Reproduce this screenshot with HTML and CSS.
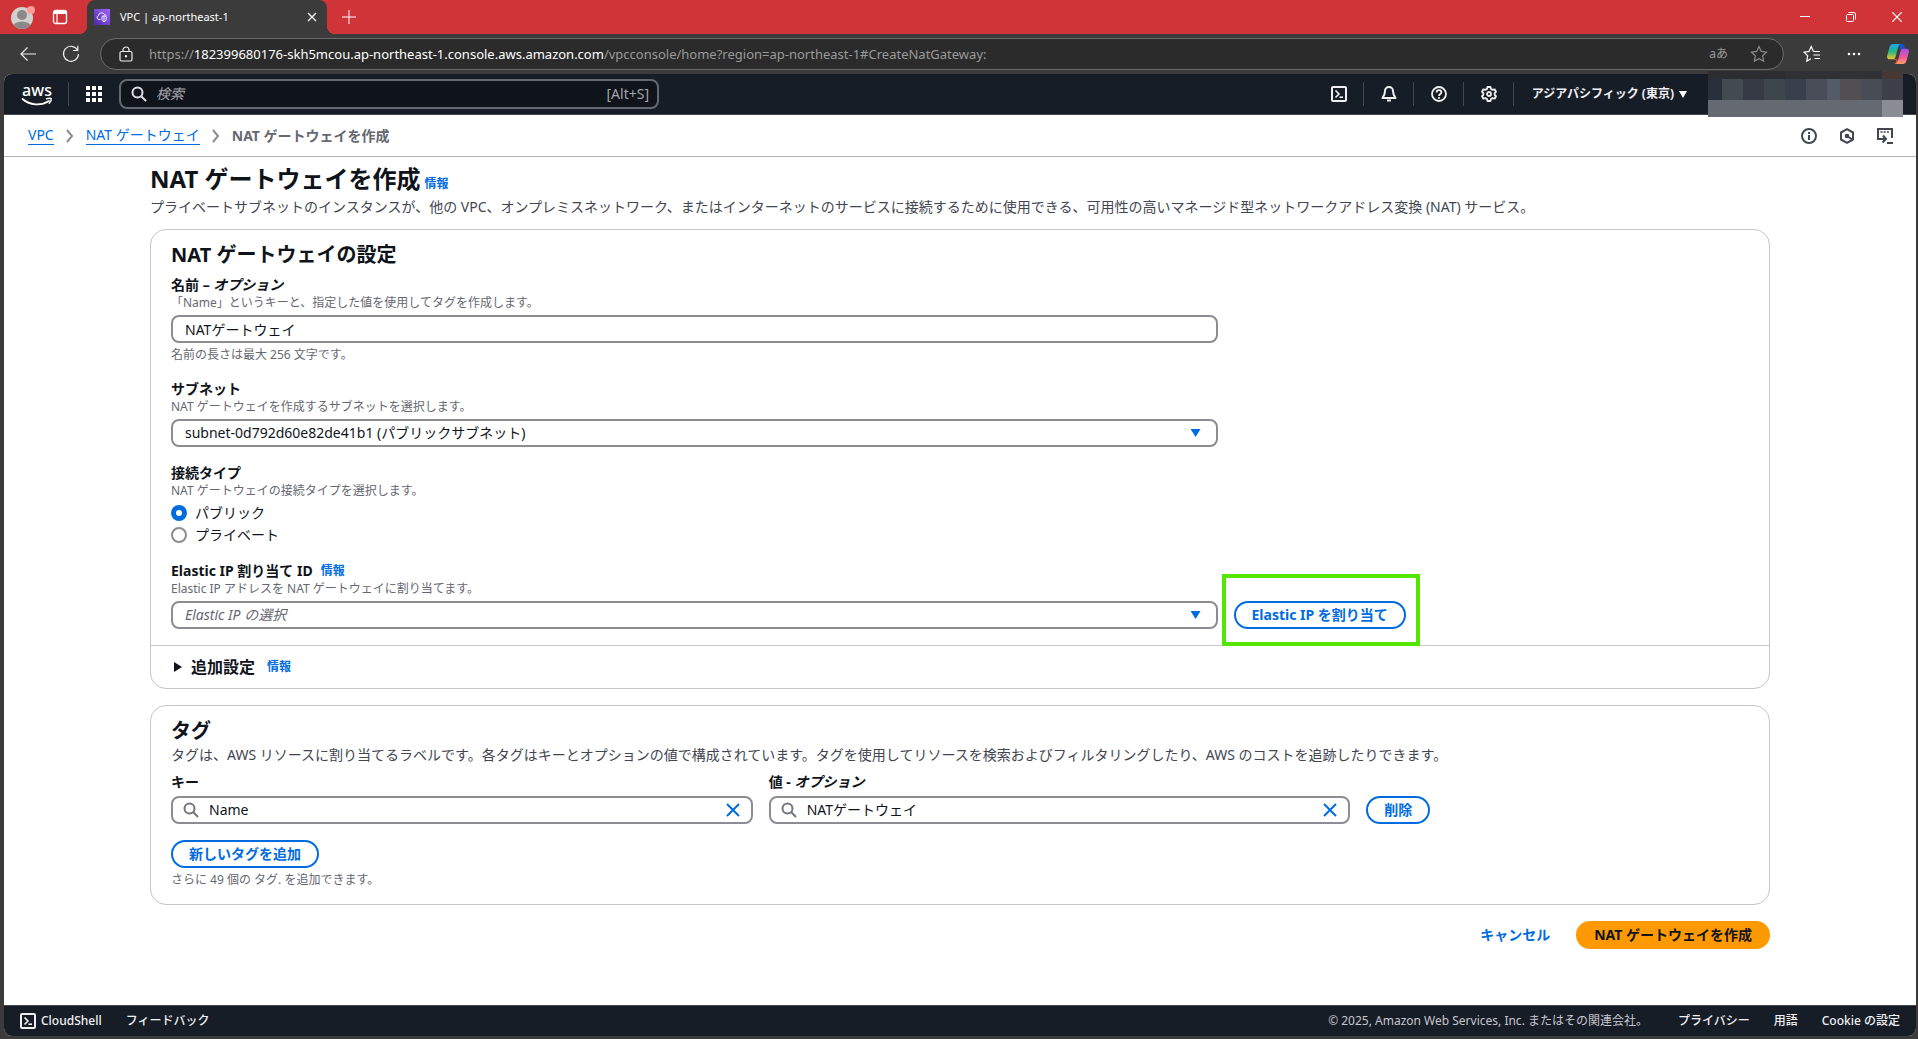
FILE: index.html
```html
<!DOCTYPE html>
<html lang="ja">
<head>
<meta charset="utf-8">
<meta name="viewport" content="width=device-width, initial-scale=1">
<title>VPC | ap-northeast-1</title>
<link rel="stylesheet" href="styles.css">
</head>
<body>
<div class="titlebar">
  <button class="chrome-btn profile" aria-label="プロファイル">
    <svg width="26" height="26" viewBox="0 0 26 26"><defs><clipPath id="face"><circle cx="12" cy="14" r="11"/></clipPath></defs><circle cx="12" cy="14" r="11" fill="#d3d1ce"/><g clip-path="url(#face)" fill="#8b8987"><circle cx="12" cy="11" r="5"/><ellipse cx="12" cy="23" rx="9" ry="5.500"/></g><circle cx="21" cy="6" r="4" fill="#ff9d98"/></svg>
  </button>
  <button class="chrome-btn workspaces" aria-label="タブ操作">
    <svg width="16" height="16" viewBox="0 0 16 16"><rect x="1.500" y="1.500" width="13" height="13" rx="2" fill="none" stroke="#fff" stroke-width="1.300"/><path d="M1.500 5V3a1.500 1.500 0 0 1 1.500-1.500h10A1.500 1.500 0 0 1 14.500 3v2z" fill="#fff"/><path d="M5 5v9.500" stroke="#fff" stroke-width="1.200"/></svg>
  </button>
  <div class="tab">
    <svg class="favicon" width="16" height="16" viewBox="0 0 16 16"><defs><linearGradient id="fav" x1="0" y1="1" x2="1" y2="0"><stop offset="0" stop-color="#4d27aa"/><stop offset="1" stop-color="#a166ff"/></linearGradient></defs><rect width="16" height="16" fill="url(#fav)"/><path d="M6.500 10.500H5A2 2 0 0 1 4.500 6.600 3.200 3.200 0 0 1 10.500 5.500c1 0 1.600.6 1.800 1.200M8 7.500l2-.8 2.200.8v3c0 1-.8 1.800-2.200 2.300-1.300-.5-2-1.300-2-2.300zM10 7v5.500" fill="none" stroke="#fff" stroke-width=".9"/></svg>
    <span class="tab-title">VPC | ap-northeast-1</span>
    <button class="chrome-btn" aria-label="タブを閉じる"><svg width="10" height="10" viewBox="0 0 10 10" stroke="#fff" stroke-width="1.300"><path d="M1 1l8 8M9 1L1 9"/></svg></button>
  </div>
  <button class="chrome-btn new-tab" aria-label="新しいタブ"><svg width="14" height="14" viewBox="0 0 14 14" stroke="#fff"><path d="M7 0v14M0 7h14"/></svg></button>
  <div class="window-controls">
    <button class="chrome-btn" aria-label="最小化"><svg width="10" height="10" viewBox="0 0 10 10" stroke="#fff"><path d="M0 4.500h10"/></svg></button>
    <button class="chrome-btn" aria-label="元に戻す"><svg width="10" height="10" viewBox="0 0 10 10" fill="none" stroke="#fff"><rect x=".5" y="2.500" width="7" height="7" rx="1"/><path d="M2.500.5H8A1.500 1.500 0 0 1 9.500 2v5.500"/></svg></button>
    <button class="chrome-btn" aria-label="閉じる"><svg width="10" height="10" viewBox="0 0 10 10" stroke="#fff" stroke-width="1.200"><path d="M0 0l10 10M10 0L0 10"/></svg></button>
  </div>
</div>

<div class="toolbar">
  <button class="chrome-btn back" aria-label="戻る"><svg width="16" height="14" viewBox="0 0 16 14" fill="none" stroke="#eee" stroke-width="1.200"><path d="M16 7H1M7.500.5L1 7l6.500 6.500"/></svg></button>
  <button class="chrome-btn reload" aria-label="更新"><svg width="18" height="18" viewBox="0 0 18 18" fill="none" stroke="#eee" stroke-width="1.200"><path d="M15.500 5A7.500 7.500 0 1 0 16.500 9M15.800.8v4.700h-4.700"/></svg></button>
  <div class="address">
    <svg width="14" height="16" viewBox="0 0 14 16" fill="none" stroke="#eee" stroke-width="1.200"><rect x="1" y="5.500" width="12" height="9.500" rx="1.500"/><path d="M4 5.500V4a3 3 0 0 1 6 0v1.500"/><circle cx="7" cy="10.300" r=".6" fill="#eee"/></svg>
    <span class="url">https://<b>182399680176-skh5mcou.ap-northeast-1.console.aws.amazon.com</b>/vpcconsole/home?region=ap-northeast-1#CreateNatGateway:</span>
    <span class="translate">aあ</span>
    <svg width="18" height="18" viewBox="0 0 18 18" fill="none" stroke="#8a8a8a" stroke-width="1.200"><path d="M9 1.500l2.300 4.900 5.200.7-3.800 3.700.9 5.300L9 13.600l-4.600 2.500.9-5.300L1.500 7.100l5.200-.7z"/></svg>
  </div>
  <button class="chrome-btn" aria-label="お気に入り"><svg width="18" height="18" viewBox="0 0 18 18" fill="none" stroke="#fff" stroke-width="1.200"><path d="M10.500 6.400L8.200 1.500 6 6.400l-5 .7 3.700 3.700-.9 5.300 4.200-2.300M10.500 6.500H17M10.500 10H17M11.500 13.500H17"/></svg></button>
  <button class="chrome-btn" aria-label="設定など"><svg width="14" height="4" viewBox="0 0 14 4" fill="#fff"><circle cx="2" cy="2" r="1.300"/><circle cx="7" cy="2" r="1.300"/><circle cx="12" cy="2" r="1.300"/></svg></button>
  <button class="chrome-btn" aria-label="Copilot"><svg width="22" height="20" viewBox="0 0 22 20"><defs><linearGradient id="cp1" x1="0" y1="0" x2="0" y2="1"><stop offset="0" stop-color="#1fa8e8"/><stop offset=".5" stop-color="#26b584"/><stop offset="1" stop-color="#f6c626"/></linearGradient><linearGradient id="cp2" x1="0" y1="0" x2="0" y2="1"><stop offset="0" stop-color="#a04ff0"/><stop offset=".55" stop-color="#f0569a"/><stop offset="1" stop-color="#ffa25e"/></linearGradient></defs><path d="M12 0h3c1.500 0 2 1 2.400 2.500L18 5h-5z" fill="#1b4fd0"/><path d="M6 15h4l-1 3c-.4 1.300-1 2-2 2h4c1.500 0 2.500-1 3-2.500z" fill="#f25b3a"/><path d="M6 0h8c-1.500 0-2.200 1-2.600 2.500L8.500 13c-.5 1.600-1.200 2.300-3 2.300H2.500C.5 15.300-.4 13.500.2 11.500L2.600 3C3.200 1 4.500 0 6 0z" fill="url(#cp1)"/><path d="M16 20H8c1.500 0 2.200-1 2.600-2.500L13.500 7c.5-1.600 1.200-2.300 3-2.300h3c2 0 2.900 1.800 2.300 3.800L19.400 17c-.6 2-1.900 3-3.400 3z" fill="url(#cp2)"/></svg></button>
</div>

<div class="viewport">
  <header class="nav">
    <a class="aws" href="#" aria-label="AWS コンソールホーム"><span>aws</span><svg width="32" height="9" viewBox="0 0 32 9" fill="none" stroke="#fff" stroke-linecap="round"><path d="M1.500 2C9 8.500 20 9 28 4" stroke-width="1.800"/><path d="M25.500 1.700c2-.6 4.500-.8 4.700.1.200.8-.6 3-1.900 4.400" stroke-width="1.500"/></svg></a>
    <span class="rule rule-first"></span>
    <button class="nav-btn services" aria-label="サービス"><svg width="16" height="16" viewBox="0 0 16 16" fill="#fff"><path d="M0 0h4v4H0zM6 0h4v4H6zM12 0h4v4h-4zM0 6h4v4H0zM6 6h4v4H6zM12 6h4v4h-4zM0 12h4v4H0zM6 12h4v4H6zM12 12h4v4h-4z"/></svg></button>
    <label class="nav-search">
      <svg width="16" height="16" viewBox="0 0 16 16" fill="none" stroke="#dedee3" stroke-width="2"><circle cx="6.500" cy="6.500" r="5"/><path d="M10.500 10.500L15 15"/></svg>
      <input type="search" placeholder="検索" aria-label="検索">
      <span>[Alt+S]</span>
    </label>
    <div class="nav-tools">
      <button class="nav-btn" aria-label="CloudShell"><svg width="16" height="16" viewBox="0 0 16 16" fill="none" stroke="#f0f0f3" stroke-width="2"><rect x="1" y="1" width="14" height="14" rx="1"/><path d="M4.500 4.500L8 8l-3.500 3.500" stroke-width="1.600"/><path d="M8.500 11.200H12" stroke-width="1.600"/></svg></button>
      <span class="rule"></span>
      <button class="nav-btn" aria-label="通知"><svg width="16" height="16" viewBox="0 0 16 16" fill="none" stroke="#f0f0f3" stroke-width="2" stroke-linejoin="round"><path d="M8 1a4 4 0 0 0-4 4c0 3.500-1 5-2.500 7h13C13 10 12 8.500 12 5a4 4 0 0 0-4-4z"/><path d="M6 14.500h4"/></svg></button>
      <span class="rule"></span>
      <button class="nav-btn" aria-label="サポート"><svg width="16" height="16" viewBox="0 0 16 16" fill="none" stroke="#f0f0f3" stroke-width="1.800"><circle cx="8" cy="8" r="7"/><path d="M5.600 6.500C5.600 5 6.600 4.200 8 4.200s2.400.9 2.400 2.100C10.400 8 8 8 8 10M8 11v1.800"/></svg></button>
      <span class="rule"></span>
      <button class="nav-btn" aria-label="設定"><svg width="16" height="16" viewBox="0 0 16 16" fill="none" stroke="#f0f0f3" stroke-width="1.800" stroke-linejoin="round"><path d="M6.500 1h3l.5 2 1.600.9 2-.6 1.400 2.500L13.600 7.200v1.600l1.400 1.400-1.400 2.500-2-.6-1.600.9-.5 2h-3l-.5-2-1.600-.9-2 .6L1 10.200l1.400-1.400V7.200L1 5.800l1.400-2.500 2 .6L6 3z"/><circle cx="8" cy="8" r="2"/></svg></button>
      <span class="rule"></span>
      <button class="nav-btn region">アジアパシフィック (東京)<svg width="8" height="7" viewBox="0 0 8 7" fill="#fff"><path d="M0 0h8L4 7z"/></svg></button>
    </div>
    <svg class="redacted" width="195" height="46" viewBox="0 0 195 46" shape-rendering="crispEdges" aria-hidden="true"><path fill="#2c2d30" d="M0 0h195v8H0z"/><path fill="#303134" d="M77 0h97v8H77z"/><path fill="#463935" d="M174 0h21v8h-21z"/><path fill="#29303c" d="M0 8h14v21H0z"/><path fill="#434a50" d="M14 8h21v21H14z"/><path fill="#363a44" d="M35 8h21v21H35z"/><path fill="#3d454d" d="M56 8h21v21H56z"/><path fill="#3a3f4c" d="M77 8h21v21H77z"/><path fill="#494d57" d="M98 8h21v21H98z"/><path fill="#535b66" d="M119 8h13v21h-13z"/><path fill="#514f52" d="M132 8h21v21h-21z"/><path fill="#484c55" d="M153 8h21v21h-21z"/><path fill="#3d404a" d="M174 8h21v21h-21z"/><path fill="#656971" d="M0 29h174v17H0z"/><path fill="#8a8d95" d="M174 29h21v17h-21z"/></svg>
  </header>

  <nav class="crumbs" aria-label="パンくずリスト">
    <a href="#">VPC</a>
    <svg width="8" height="14" viewBox="0 0 8 14" fill="none" stroke="#8c8c94" stroke-width="2"><path d="M1 1l5 6-5 6"/></svg>
    <a href="#">NAT ゲートウェイ</a>
    <svg width="8" height="14" viewBox="0 0 8 14" fill="none" stroke="#8c8c94" stroke-width="2"><path d="M1 1l5 6-5 6"/></svg>
    <span class="current" aria-current="page">NAT ゲートウェイを作成</span>
    <div class="crumb-tools">
      <button class="nav-btn" aria-label="情報"><svg width="16" height="16" viewBox="0 0 16 16" fill="none" stroke="#424650" stroke-width="2"><circle cx="8" cy="8" r="7"/><path d="M8 7v5M8 4v2"/></svg></button>
      <button class="nav-btn" aria-label="診断"><svg width="16" height="16" viewBox="0 0 16 16" fill="none" stroke="#424650" stroke-width="2"><path d="M8 1.200l6 3.300v7l-6 3.300-6-3.300v-7z" stroke-linejoin="round"/><circle cx="8" cy="8" r="1.300" fill="#424650"/><path d="M8.500 8.500l5 3"/></svg></button>
      <button class="nav-btn" aria-label="ショートカット"><svg width="16" height="16" viewBox="0 0 16 16" fill="none" stroke="#424650" stroke-width="2"><path d="M4 11H1V1h14v9"/><path d="M3.500 4h2M6.700 4h2M9.900 4h2" stroke-width="1.500"/><path d="M3.500 11H8M6 7.500L9 11l-3.500 3.500M10 15h6"/></svg></button>
    </div>
  </nav>

  <main class="content">
    <div class="page-head">
      <h1>NAT ゲートウェイを作成</h1>
      <a class="info" href="#">情報</a>
    </div>
    <p class="lead">プライベートサブネットのインスタンスが、他の VPC、オンプレミスネットワーク、またはインターネットのサービスに接続するために使用できる、可用性の高いマネージド型ネットワークアドレス変換 (NAT) サービス。</p>

    <section class="card">
      <div class="card-body">
        <h2>NAT ゲートウェイの設定</h2>
        <div class="fields">
          <div class="field">
            <div>
              <label class="label" for="name">名前 – <i>オプション</i></label>
              <p class="hint">「Name」というキーと、指定した値を使用してタグを作成します。</p>
            </div>
            <input class="control" id="name" type="text" value="NATゲートウェイ">
            <p class="hint">名前の長さは最大 256 文字です。</p>
          </div>
          <div class="field">
            <div>
              <label class="label" for="subnet">サブネット</label>
              <p class="hint">NAT ゲートウェイを作成するサブネットを選択します。</p>
            </div>
            <div class="select"><select class="control" id="subnet"><option>subnet-0d792d60e82de41b1 (パブリックサブネット)</option></select></div>
          </div>
          <div class="field" role="radiogroup" aria-labelledby="type-label">
            <div>
              <span class="label" id="type-label">接続タイプ</span>
              <p class="hint">NAT ゲートウェイの接続タイプを選択します。</p>
            </div>
            <div class="radios">
              <label><input type="radio" name="type" checked>パブリック</label>
              <label><input type="radio" name="type">プライベート</label>
            </div>
          </div>
          <div class="field">
            <div>
              <div class="label-row"><label class="label" for="eip">Elastic IP 割り当て ID</label><a class="info" href="#">情報</a></div>
              <p class="hint">Elastic IP アドレスを NAT ゲートウェイに割り当てます。</p>
            </div>
            <div class="select"><select class="control empty" id="eip"><option>Elastic IP の選択</option></select></div>
          </div>
          <div class="highlight"><button class="btn">Elastic IP を割り当て</button></div>
        </div>
      </div>
      <details class="more">
        <summary><svg width="8" height="10" viewBox="0 0 8 10" fill="#0f141a"><path d="M0 0l8 5-8 5z"/></svg><strong>追加設定</strong><a class="info" href="#">情報</a></summary>
      </details>
    </section>

    <section class="card">
      <div class="card-body">
        <h2>タグ</h2>
        <p class="lead">タグは、AWS リソースに割り当てるラベルです。各タグはキーとオプションの値で構成されています。タグを使用してリソースを検索およびフィルタリングしたり、AWS のコストを追跡したりできます。</p>
        <div class="tag-grid">
          <div class="field">
            <label class="label" for="key">キー</label>
            <div class="control search">
              <svg width="16" height="16" viewBox="0 0 16 16" fill="none" stroke="#72747e" stroke-width="2"><circle cx="6.500" cy="6.500" r="5"/><path d="M10.500 10.500L15 15"/></svg>
              <input id="key" type="text" value="Name">
              <button aria-label="クリア"><svg width="14" height="14" viewBox="0 0 14 14" stroke="#006ce0" stroke-width="2"><path d="M1 1l12 12M13 1L1 13"/></svg></button>
            </div>
          </div>
          <div class="field">
            <label class="label" for="value">値 - <i>オプション</i></label>
            <div class="control search">
              <svg width="16" height="16" viewBox="0 0 16 16" fill="none" stroke="#72747e" stroke-width="2"><circle cx="6.500" cy="6.500" r="5"/><path d="M10.500 10.500L15 15"/></svg>
              <input id="value" type="text" value="NATゲートウェイ">
              <button aria-label="クリア"><svg width="14" height="14" viewBox="0 0 14 14" stroke="#006ce0" stroke-width="2"><path d="M1 1l12 12M13 1L1 13"/></svg></button>
            </div>
          </div>
          <button class="btn">削除</button>
        </div>
        <button class="btn add-tag">新しいタグを追加</button>
        <p class="hint">さらに 49 個の タグ. を追加できます。</p>
      </div>
    </section>

    <div class="actions">
      <button class="btn plain">キャンセル</button>
      <button class="btn primary">NAT ゲートウェイを作成</button>
    </div>
  </main>

  <footer class="footer">
    <a class="shell" href="#"><svg width="16" height="16" viewBox="0 0 16 16" fill="none" stroke="#f0f0f3" stroke-width="2"><rect x="1" y="1" width="14" height="14" rx="1"/><path d="M4.500 4.500L8 8l-3.500 3.500" stroke-width="1.600"/><path d="M8.500 11.200H12" stroke-width="1.600"/></svg>CloudShell</a>
    <a href="#">フィードバック</a>
    <span class="copyright">© 2025, Amazon Web Services, Inc. またはその関連会社。</span>
    <a href="#">プライバシー</a>
    <a href="#">用語</a>
    <a href="#">Cookie の設定</a>
  </footer>
</div>
</body>
</html>
```
FILE: styles.css
```css
* { box-sizing: border-box; }

body {
  margin: 0;
  min-height: 100vh;
  display: flex;
  flex-direction: column;
  background: #3b3b3b;
  color: #0f141a;
  font: 14px/20px "Noto Sans", "Noto Sans CJK JP", sans-serif;
}

h1, h2, p { margin: 0; }
a { color: #006ce0; text-decoration: none; }
svg { display: block; flex: none; }
button, input, select { font: inherit; color: inherit; margin: 0; }
button { cursor: pointer; }

/* Browser frame */
.chrome-btn,
.nav-btn {
  display: flex;
  align-items: center;
  justify-content: center;
  padding: 0;
  border: 0;
  background: none;
}

.titlebar {
  display: flex;
  align-items: center;
  height: 34px;
  background: #d13438;
}
.profile { margin-left: 10px; }
.workspaces { margin-left: 16px; }
.tab {
  position: relative;
  display: flex;
  align-items: center;
  width: 240px;
  height: 34px;
  margin-left: 19px;
  padding: 0 10px 0 7px;
  border-radius: 8px 8px 0 0;
  background: #3b3b3b;
  color: #fff;
  font-size: 11px;
}
.tab::before,
.tab::after {
  content: "";
  position: absolute;
  bottom: 0;
  width: 8px;
  height: 8px;
}
.tab::before { right: 100%; background: radial-gradient(circle at 0 0, transparent 8px, #3b3b3b 8px); }
.tab::after { left: 100%; background: radial-gradient(circle at 100% 0, transparent 8px, #3b3b3b 8px); }
.tab-title { flex: 1; margin-left: 10px; }
.new-tab { margin-left: 15px; }
.window-controls { display: flex; gap: 4px; margin-left: auto; }
.window-controls .chrome-btn { width: 42px; height: 34px; }

.toolbar {
  display: flex;
  align-items: center;
  gap: 26px;
  height: 40px;
  padding: 0 9px 0 20px;
}
.address {
  flex: 1;
  display: flex;
  align-items: center;
  min-width: 0;
  height: 32px;
  margin: 0 -7px 0 -6px;
  padding: 0 15px 0 18px;
  border: 1px solid #6b6b6b;
  border-radius: 16px;
  background: #2b2b2b;
}
.url {
  flex: 1;
  margin-left: 16px;
  color: #9a9a9a;
  font-size: 13px;
  white-space: nowrap;
  overflow: hidden;
}
.url b { color: #fff; font-weight: 400; }
.translate { margin-right: 22px; color: #9a9a9a; font-size: 12px; }

/* Page area */
.viewport {
  flex: 1;
  display: flex;
  flex-direction: column;
  margin: 0 2px 3px 4px;
  border-radius: 8px;
  background: #fff;
}

.nav {
  position: relative;
  display: flex;
  align-items: center;
  height: 41px;
  padding: 0 229px 0 16px;
  border-bottom: 1px solid #424650;
  border-radius: 8px 8px 0 0;
  background: #161d26;
  color: #f0f0f3;
}
.aws {
  display: flex;
  flex-direction: column;
  align-items: center;
  width: 34px;
  color: #fff;
  font-size: 16px;
  font-weight: 500;
  line-height: 14px;
}
.rule { width: 1px; height: 24px; background: #424650; }
.rule-first { margin-left: 14px; }
.services { margin-left: 17px; }
.nav-search {
  display: flex;
  align-items: center;
  width: 540px;
  height: 30px;
  margin-left: 17px;
  padding: 0 8px 0 10px;
  border: 2px solid #656871;
  border-radius: 8px;
  background: #0f141a;
  color: #a4a4ad;
}
.nav-search input {
  flex: 1;
  min-width: 0;
  padding: 0;
  margin-left: 9px;
  border: 0;
  outline: 0;
  background: none;
}
.nav-search input::placeholder { color: #a4a4ad; font-style: italic; opacity: 1; }
.nav-tools { display: flex; align-items: center; margin-left: auto; }
.nav-tools .nav-btn { padding: 0 16px 0 17px; }
.nav-tools .region {
  gap: 5px;
  padding: 0 0 0 18px;
  font-size: 12px;
  font-weight: 700;
}
.redacted { position: absolute; top: -3px; right: 13px; }

.crumbs {
  display: flex;
  align-items: center;
  gap: 12px;
  height: 42px;
  padding: 0 23px 0 24px;
  border-bottom: 1px solid #b4b4bb;
}
.crumbs a { line-height: 18px; border-bottom: 1px solid; }
.current { color: #656871; font-weight: 700; }
.crumb-tools { display: flex; gap: 22px; margin-left: auto; }

/* Form */
.content { flex: 1; padding: 6px 146px 40px; }
.page-head { display: flex; align-items: baseline; gap: 4px; }
h1 { font-size: 24px; line-height: 32px; }
h2 { font-size: 20px; line-height: 24px; }
.info { font-size: 12px; font-weight: 700; }
.lead { margin-top: 2px; color: #424650; }

.card {
  margin-top: 16px;
  border: 1px solid #c6c6cd;
  border-radius: 16px;
}
.lead + .card { margin-top: 12px; }
.card-body { padding: 13px 20px 16px; }
.fields {
  display: grid;
  grid-template-columns: 67fr 33fr;
  gap: 16px;
  margin-top: 8px;
}
.fields .field { grid-column: 1; }
.field { display: flex; flex-direction: column; gap: 4px; min-width: 0; }
.label { display: block; font-weight: 700; }
.label-row { display: flex; align-items: center; gap: 8px; }
.hint { color: #656871; font-size: 12px; line-height: 16px; }

.control {
  display: block;
  width: 100%;
  height: 28px;
  padding: 0 12px;
  border: 2px solid #8c8c94;
  border-radius: 8px;
  background: #fff;
  appearance: none;
}
.empty { color: #656871; font-style: italic; }
.select { position: relative; }
.select::after {
  content: "";
  position: absolute;
  top: 10px;
  right: 17px;
  width: 10px;
  height: 8px;
  background: #006ce0;
  clip-path: polygon(0 0, 100% 0, 50% 100%);
}

.radios { display: flex; flex-direction: column; gap: 2px; }
.radios label { display: flex; align-items: center; gap: 8px; }
.radios input {
  appearance: none;
  width: 16px;
  height: 16px;
  border: 2px solid #8c8c94;
  border-radius: 50%;
  background: #fff;
}
.radios input:checked { border: 5px solid #006ce0; }

.btn {
  height: 28px;
  padding: 0 16px;
  border: 2px solid #006ce0;
  border-radius: 14px;
  background: #fff;
  color: #006ce0;
  font-weight: 700;
  line-height: 20px;
  white-space: nowrap;
}
.plain { border-color: transparent; }
.primary { border-color: #ff9900; background: #ff9900; color: #0f141a; }

.highlight { position: relative; align-self: end; justify-self: start; }
.highlight::after {
  content: "";
  position: absolute;
  inset: -27px -14px -17px -12px;
  border: 4px solid #55e600;
  pointer-events: none;
}

.more { border-top: 1px solid #c6c6cd; }
.more summary {
  display: flex;
  align-items: center;
  height: 42px;
  padding: 0 23px;
  list-style: none;
}
.more strong { margin: 0 12px 0 9px; font-size: 16px; }

.tag-grid {
  display: grid;
  grid-template-columns: 38fr 38fr 25fr;
  align-items: end;
  justify-items: start;
  gap: 16px;
  margin-top: 7px;
}
.tag-grid .field { width: 100%; }
.search { display: flex; align-items: center; padding: 0 11px 0 10px; }
.search input {
  flex: 1;
  min-width: 0;
  margin-left: 10px;
  padding: 0;
  border: 0;
  outline: 0;
  background: none;
}
.search button { padding: 0; border: 0; background: none; }
.add-tag { display: block; margin: 16px 0 4px; }

.actions { display: flex; justify-content: flex-end; gap: 8px; margin-top: 16px; }

.footer {
  display: flex;
  align-items: center;
  gap: 24px;
  height: 31px;
  padding: 0 16px;
  border-top: 1px solid #424650;
  border-radius: 0 0 8px 8px;
  background: #161d26;
  font-size: 12px;
  font-weight: 500;
}
.footer a { color: #f0f0f3; }
.footer .shell { display: flex; align-items: center; gap: 5px; }
.copyright { margin: 0 6px 0 auto; color: #c6c6cd; font-weight: 400; }
```
